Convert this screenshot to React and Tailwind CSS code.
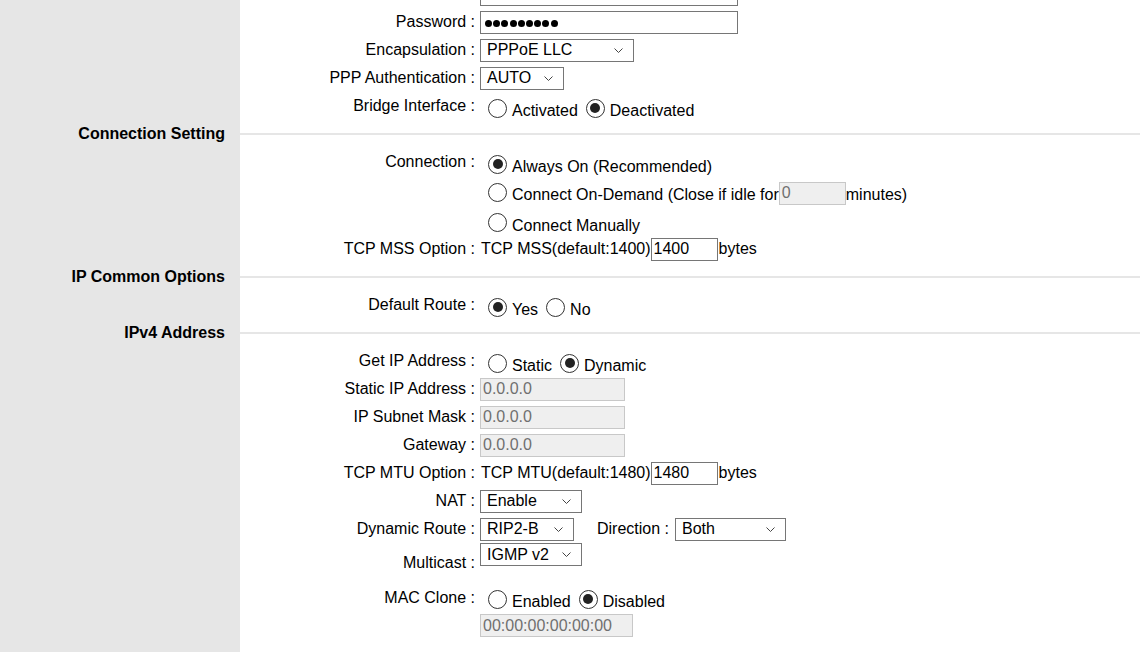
import React from 'react';

// WAN / PPPoE settings form, classic router admin look
const Chevron = () => (
  <svg width="9" height="5" viewBox="0 0 9 5" className="shrink-0">
    <path d="M0.5 0.5 L4.5 4.5 L8.5 0.5" fill="none" stroke="#444" strokeWidth="1" />
  </svg>
);

const Select = ({ value, w }) => (
  <div className={`${w} h-[23px] shrink-0 border border-[#767676] bg-white flex items-center justify-between pl-[6px] pr-[10px]`}>
    <span>{value}</span>
    <Chevron />
  </div>
);

const TextBox = ({ value, w, disabled }) => (
  <div
    className={`${w} h-[23px] shrink-0 border flex items-center pl-[2px] ${
      disabled ? 'border-[#c8c8c8] bg-[#efefef] text-[#707070]' : 'border-[#767676] bg-white'
    }`}
  >
    {value}
  </div>
);

const Radio = ({ label, checked }) => (
  <span className="flex items-center ml-[8px]">
    <span className="w-[19px] h-[19px] -mt-[6px] rounded-full border border-[#333] bg-white flex items-center justify-center shrink-0">
      {checked && <span className="w-[10px] h-[10px] rounded-full bg-[#222]" />}
    </span>
    <span className="ml-[5px]">{label}</span>
  </span>
);

const RadioGroup = ({ options, value }) => (
  <div className="flex items-center pt-[10px]">
    {options.map((o) => (
      <Radio key={o} label={o} checked={o === value} />
    ))}
  </div>
);

const Row = ({ label, h = 'h-[28px]', labelH = 'h-[28px]', align = 'items-center', children }) => (
  <div className={`flex ${h} shrink-0`}>
    <div className="w-[240px] shrink-0 bg-[#e6e6e6]" />
    <div className="w-[235px] shrink-0 flex items-start justify-end">
      {label && <div className={`${labelH} flex items-center whitespace-pre`}>{label} :</div>}
    </div>
    <div className={`flex-1 flex ${align} pl-[5px]`}>{children}</div>
  </div>
);

const Section = ({ title }) => (
  <div className="flex h-[28px] shrink-0">
    <div className="w-[240px] shrink-0 bg-[#e6e6e6] flex items-center justify-end pr-[15px] font-bold">
      {title}
    </div>
    <div className="flex-1 flex items-center">
      <div className="h-[2px] w-full bg-[#e6e6e6]" />
    </div>
  </div>
);

const PasswordDots = ({ count }) => (
  <div className="w-[258px] h-[23px] border border-[#767676] bg-white flex items-center gap-[1.2px] pl-[4px] pt-[3px]">
    {Array.from({ length: count }).map((_, i) => (
      <span key={i} className="w-[7px] h-[7px] rounded-full bg-black" />
    ))}
  </div>
);

export default function App() {
  return (
    <div className="h-[652px] w-full overflow-hidden bg-white text-black text-[16px] leading-[18px] font-['Liberation_Sans',Arial,sans-serif] flex flex-col">
      <div className="-mt-[20px] flex flex-col">
        {/* username row, scrolled mostly out of view */}
        <Row>
          <TextBox value="" w="w-[258px]" />
        </Row>
        <Row label="Password">
          <PasswordDots count={9} />
        </Row>
        <Row label="Encapsulation">
          <Select value="PPPoE LLC" w="w-[154px]" />
        </Row>
        <Row label="PPP Authentication">
          <Select value="AUTO" w="w-[84px]" />
        </Row>
        <Row label="Bridge Interface">
          <RadioGroup options={['Activated', 'Deactivated']} value="Deactivated" />
        </Row>

        <Section title="Connection Setting" />
        <Row label="Connection" h="h-[87px]" align="items-start">
          <div className="flex flex-col">
            <div className="h-[28px] flex items-center pt-[10px]">
              <Radio label="Always On (Recommended)" checked />
            </div>
            <div className="h-[30px] flex items-center pt-[8px]">
              <Radio label="Connect On-Demand (Close if idle for" />
              <div className="-mt-[4px]">
                <TextBox value="0" w="w-[67px]" disabled />
              </div>
              <span>minutes)</span>
            </div>
            <div className="h-[29px] flex items-center pt-[10px]">
              <Radio label="Connect Manually" />
            </div>
          </div>
        </Row>
        <Row label="TCP MSS Option">
          <span className="ml-[1px]">TCP MSS(default:1400)</span>
          <TextBox value="1400" w="w-[67px]" />
          <span className="ml-[1px]">bytes</span>
        </Row>

        <Section title="IP Common Options" />
        <Row label="Default Route">
          <RadioGroup options={['Yes', 'No']} value="Yes" />
        </Row>

        <Section title="IPv4 Address" />
        <Row label="Get IP Address">
          <RadioGroup options={['Static', 'Dynamic']} value="Dynamic" />
        </Row>
        <Row label="Static IP Address">
          <TextBox value="0.0.0.0" w="w-[145px]" disabled />
        </Row>
        <Row label="IP Subnet Mask">
          <TextBox value="0.0.0.0" w="w-[145px]" disabled />
        </Row>
        <Row label="Gateway">
          <TextBox value="0.0.0.0" w="w-[145px]" disabled />
        </Row>
        <Row label="TCP MTU Option">
          <span className="ml-[1px]">TCP MTU(default:1480)</span>
          <TextBox value="1480" w="w-[67px]" />
          <span className="ml-[1px]">bytes</span>
        </Row>
        <Row label="NAT">
          <Select value="Enable" w="w-[102px]" />
        </Row>
        <Row label="Dynamic Route">
          <Select value="RIP2-B" w="w-[94px]" />
          <span className="ml-[23px] whitespace-pre">Direction :</span>
          <div className="ml-[6px]">
            <Select value="Both" w="w-[111px]" />
          </div>
        </Row>
        <Row label="Multicast" h="h-[38px]" labelH="h-[40px]" align="items-start">
          <Select value="IGMP v2" w="w-[102px]" />
        </Row>
        <Row label="MAC Clone" h="h-[66px]" labelH="h-[34px]" align="items-start">
          <div className="flex flex-col">
            <div className="h-[31px] flex items-center pt-[11px]">
              <Radio label="Enabled" />
              <Radio label="Disabled" checked />
            </div>
            <div className="mt-[2px]">
              <TextBox value="00:00:00:00:00:00" w="w-[153px]" disabled />
            </div>
          </div>
        </Row>
      </div>
      <div className="flex flex-1">
        <div className="w-[240px] shrink-0 bg-[#e6e6e6]" />
      </div>
    </div>
  );
}
